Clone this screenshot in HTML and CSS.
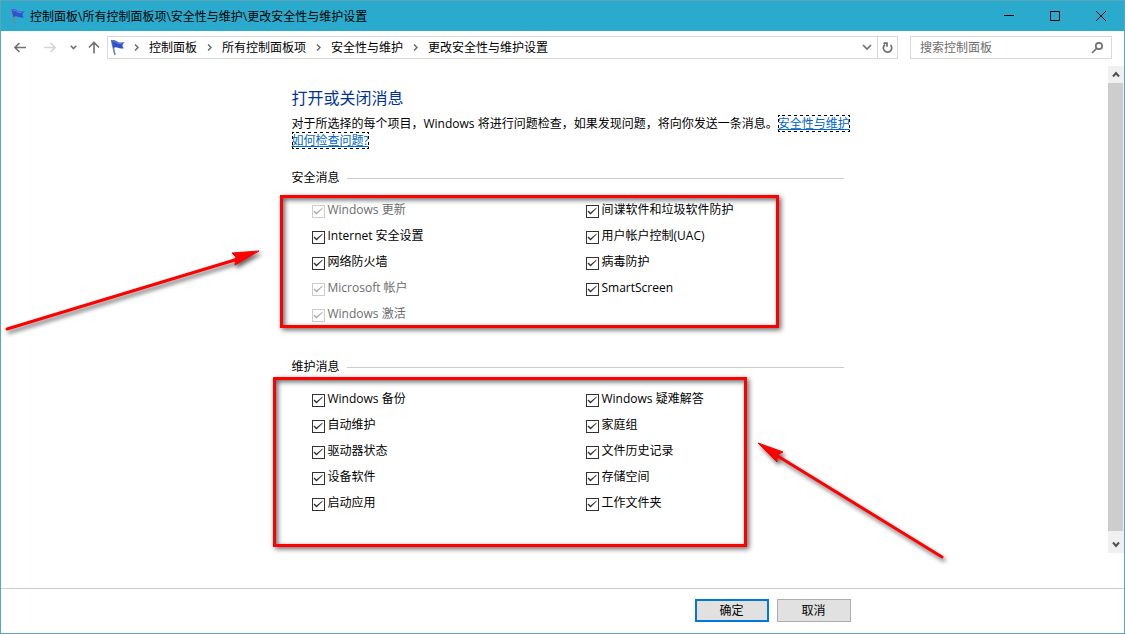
FILE: index.html
```
<!DOCTYPE html>
<html lang="zh-CN">
<head>
  <meta charset="UTF-8">
  <title>更改安全性与维护设置</title>
  <link rel="stylesheet" href="styles.css">
</head>
<body>

  <svg class="defs" aria-hidden="true">
    <symbol id="flag" viewBox="0 0 16 17">
      <path d="M1.500 1 5 16" stroke="#75869a" stroke-width="1.600" fill="none"/>
      <path d="M1.500 1.500C4 0 6 1.500 8 3c2 1 4 .5 7 .2-1.500 1-2.500 2-2.600 3.300.2 1.200.8 2 1.600 2.700-2.500.6-4.500.4-6-.4-1.600-.9-3-.9-4.600.4z" fill="#3152cc"/>
      <path d="M2.500 2.200C5 1.500 6 3.500 8.500 4.300c1.200.4 2.200.3 3.200 0" stroke="#7f9df0" stroke-width=".7" fill="none"/>
    </symbol>
    <symbol id="sep" viewBox="0 0 25 9">
      <path d="m11 1.500 3 3-3 3" stroke="#666" stroke-width="1.400" fill="none"/>
    </symbol>
  </svg>

  <div class="window">
    <!-- title bar -->
    <header class="titlebar">
      <svg class="flag"><use href="#flag"/></svg>
      <span class="caption">控制面板\所有控制面板项\安全性与维护\更改安全性与维护设置</span>
      <button class="win-btn" aria-label="最小化"><svg width="10" height="10"><path d="M0 4.500h10"/></svg></button>
      <button class="win-btn" aria-label="最大化"><svg width="10" height="10"><path d="M.5.5h9v9h-9z"/></svg></button>
      <button class="win-btn" aria-label="关闭"><svg width="10" height="10"><path d="m0 0 10 10m0-10-10 10"/></svg></button>
    </header>

    <!-- navigation -->
    <nav class="toolbar">
      <button class="nav-btn" aria-label="后退"><svg width="12" height="11"><path d="M12 5.500H1M5.500 1 1 5.500 5.500 10"/></svg></button>
      <button class="nav-btn off" aria-label="前进" disabled><svg width="12" height="11"><path d="M0 5.500h11M6.500 1 11 5.500 6.500 10"/></svg></button>
      <button class="nav-btn recent" aria-label="最近位置"><svg width="7" height="5"><path d="m.8.8 2.700 2.700L6.200.8"/></svg></button>
      <button class="nav-btn up" aria-label="向上"><svg width="12" height="13"><path d="M6 12.500v-11M1 6.500l5-5 5 5"/></svg></button>

      <div class="address">
        <svg class="flag"><use href="#flag"/></svg>
        <svg class="sep"><use href="#sep"/></svg>
        <a href="#">控制面板</a>
        <svg class="sep"><use href="#sep"/></svg>
        <a href="#">所有控制面板项</a>
        <svg class="sep"><use href="#sep"/></svg>
        <a href="#">安全性与维护</a>
        <svg class="sep"><use href="#sep"/></svg>
        <a href="#">更改安全性与维护设置</a>
        <button class="addr-btn drop" aria-label="历史"><svg width="10" height="7"><path d="m1 1 4 4 4-4"/></svg></button>
        <button class="addr-btn refresh" aria-label="刷新"><svg width="11" height="12"><path d="M3 2.500A4.200 4.200 0 1 0 8.600 3M1.500 1.200H5v3.600"/></svg></button>
      </div>

      <div class="search">
        <input type="text" placeholder="搜索控制面板" aria-label="搜索控制面板">
        <svg width="12" height="12"><circle cx="8" cy="4" r="3.200"/><path d="M5.500 6.500 1 11"/></svg>
      </div>
    </nav>

    <div class="body">
      <main class="page">
        <div class="content">
          <h1>打开或关闭消息</h1>
          <p>对于所选择的每个项目，Windows 将进行问题检查，如果发现问题，将向你发送一条消息。<a class="help" href="#">安全性与维护如何检查问题?</a></p>

          <section class="group">
            <h2>安全消息</h2>
            <div class="options">
              <label class="off"><input type="checkbox" checked disabled><span>Windows 更新</span></label>
              <label><input type="checkbox" checked><span>间谍软件和垃圾软件防护</span></label>
              <label><input type="checkbox" checked><span>Internet 安全设置</span></label>
              <label><input type="checkbox" checked><span>用户帐户控制(UAC)</span></label>
              <label><input type="checkbox" checked><span>网络防火墙</span></label>
              <label><input type="checkbox" checked><span>病毒防护</span></label>
              <label class="off"><input type="checkbox" checked disabled><span>Microsoft 帐户</span></label>
              <label><input type="checkbox" checked><span>SmartScreen</span></label>
              <label class="off"><input type="checkbox" checked disabled><span>Windows 激活</span></label>
            </div>
            <div class="mark mark-security"></div>
            <svg class="arrow arrow-security" width="260" height="90">
              <path class="line" d="M5 83 236 13"/>
              <path class="head" d="M257 5 230 7l4 4-1 8z"/>
            </svg>
          </section>

          <section class="group">
            <h2>维护消息</h2>
            <div class="options">
              <label><input type="checkbox" checked><span>Windows 备份</span></label>
              <label><input type="checkbox" checked><span>Windows 疑难解答</span></label>
              <label><input type="checkbox" checked><span>自动维护</span></label>
              <label><input type="checkbox" checked><span>家庭组</span></label>
              <label><input type="checkbox" checked><span>驱动器状态</span></label>
              <label><input type="checkbox" checked><span>文件历史记录</span></label>
              <label><input type="checkbox" checked><span>设备软件</span></label>
              <label><input type="checkbox" checked><span>存储空间</span></label>
              <label><input type="checkbox" checked><span>启动应用</span></label>
              <label><input type="checkbox" checked><span>工作文件夹</span></label>
            </div>
            <div class="mark mark-maintenance"></div>
            <svg class="arrow arrow-maintenance" width="200" height="125">
              <path class="line" d="M188 117 22 15"/>
              <path class="head" d="m4 3 25 9-6 3 0 7z"/>
            </svg>
          </section>
        </div>
      </main>

      <div class="scrollbar">
        <button aria-label="向上滚动"><svg width="8" height="7"><path d="m1 5.500 3-3.500 3 3.500"/></svg></button>
        <div class="thumb"></div>
        <button class="down" aria-label="向下滚动"><svg width="8" height="7"><path d="m1 1.500 3 3.500 3-3.500"/></svg></button>
      </div>
    </div>

    <footer class="footer">
      <div class="actions">
        <button class="default">确定</button>
        <button>取消</button>
      </div>
    </footer>
  </div>

</body>
</html>
```
FILE: styles.css
```
* {
  box-sizing: border-box;
}

body {
  margin: 0;
  font-family: "Open Sans", "Noto Sans CJK SC", sans-serif;
  font-size: 12px;
  line-height: 17px;
  color: #000;
  background: #fff;
}

button,
input {
  font: inherit;
  color: inherit;
}

button {
  padding: 0;
  border: none;
  background: none;
}

svg {
  display: block;
  flex: none;
  fill: none;
}

.defs {
  position: absolute;
  width: 0;
  height: 0;
}

.window {
  display: flex;
  flex-direction: column;
  min-height: 100vh;
  border: 1px solid #5ba7b9;
  overflow: hidden;
}

.flag {
  width: 16px;
  height: 17px;
}

/* title bar */
.titlebar {
  display: flex;
  align-items: center;
  height: 30px;
  padding-left: 9px;
  background: #2aabcd;
}

.caption {
  flex: 1;
  margin-left: 4px;
}

.win-btn {
  display: flex;
  align-items: center;
  justify-content: center;
  width: 46px;
  height: 28px;
}

.win-btn svg {
  stroke: #000;
}

/* navigation */
.toolbar {
  display: flex;
  align-items: center;
  height: 35px;
  padding: 0 12px 2px 4px;
}

.nav-btn {
  display: flex;
  align-items: center;
  justify-content: center;
  width: 30px;
  height: 23px;
}

.nav-btn svg {
  stroke: #707070;
  stroke-width: 1.6;
}

.nav-btn.off svg {
  stroke: #d5d5d5;
}

.nav-btn.recent {
  width: 16px;
}

.nav-btn.up {
  width: 26px;
}

.address {
  display: flex;
  flex: 1;
  align-items: center;
  height: 23px;
  margin-right: 12px;
  padding-left: 2px;
  border: 1px solid #d9d9d9;
}

.address .flag {
  margin-right: -2px;
}

.address a {
  color: #000;
  text-decoration: none;
}

.sep {
  width: 25px;
  height: 9px;
}

.addr-btn {
  display: flex;
  align-items: center;
  justify-content: center;
  width: 20px;
  height: 21px;
}

.addr-btn svg {
  stroke: #707070;
  stroke-width: 1.7;
}

.drop {
  margin-left: auto;
}

.refresh {
  border-left: 1px solid #d9d9d9;
}

.search {
  display: flex;
  align-items: center;
  width: 202px;
  height: 23px;
  padding: 0 8px 0 9px;
  border: 1px solid #d9d9d9;
}

.search input {
  flex: 1;
  min-width: 0;
  padding: 0;
  border: none;
  outline: none;
}

.search input::placeholder {
  color: #6d6d6d;
}

.search svg {
  stroke: #707070;
  stroke-width: 1.7;
}

/* page */
.body {
  display: flex;
  flex: 1;
  padding-bottom: 35px;
}

.page {
  flex: 1;
  padding-top: 20px;
}

.content {
  width: 602px;
  margin: 0 auto;
  padding-left: 38px;
}

h1 {
  margin: 0 0 5px;
  font-size: 16px;
  font-weight: normal;
  line-height: 24px;
  color: #003399;
}

p {
  margin: 0;
}

.help {
  color: #0066cc;
  outline: 1px dotted #000;
  outline-offset: -1px;
}

.group {
  position: relative;
  width: 552px;
  margin-top: 19px;
}

.group + .group {
  margin-top: 29px;
}

h2 {
  display: flex;
  align-items: center;
  gap: 7px;
  margin: 0 0 10px;
  font-size: 12px;
  font-weight: normal;
  line-height: 20px;
}

h2::after {
  content: "";
  flex: 1;
  height: 1px;
  background: #ccc;
}

.options {
  display: grid;
  grid-template-columns: 274px 1fr;
  grid-auto-rows: 26px;
  padding-left: 20px;
}

.options label {
  display: flex;
  align-items: center;
  gap: 3px;
}

.options span {
  padding-bottom: 3px;
}

.options .off {
  color: #6d6d6d;
}

.options input {
  width: 13px;
  height: 13px;
  margin: 0;
  border: 1px solid #333;
  background: #fff;
  appearance: none;
}

.options input:checked::before {
  content: "";
  display: block;
  width: 11px;
  height: 11px;
  background: #333;
  clip-path: polygon(1px 6px, 2px 5px, 4px 7px, 10px 2px, 10px 3px, 4px 9px);
}

.options input:disabled {
  border-color: #ccc;
}

.options input:disabled::before {
  background: #aaa;
}

/* red annotations over the page */
.mark {
  position: absolute;
  border: 3px solid #f00;
  box-shadow: 2px 2px 5px rgba(0, 0, 0, 0.6), inset 2px 2px 5px rgba(0, 0, 0, 0.6);
  pointer-events: none;
}

.mark-security {
  top: 27px;
  left: -12px;
  width: 499px;
  height: 133px;
}

.mark-maintenance {
  top: 20px;
  left: -19px;
  width: 474px;
  height: 170px;
}

.arrow {
  position: absolute;
  filter: drop-shadow(2px 3px 2px rgba(0, 0, 0, 0.6));
  overflow: visible;
  pointer-events: none;
}

.arrow-security {
  top: 78px;
  left: -290px;
}

.arrow-maintenance {
  top: 83px;
  left: 462px;
}

.arrow .line {
  stroke: #f00;
  stroke-width: 3;
  stroke-linecap: round;
}

.arrow .head {
  fill: #f00;
  stroke: #f00;
}

/* scrollbar */
.scrollbar {
  display: flex;
  flex-direction: column;
  width: 16px;
  background: #f0f0f0;
}

.scrollbar button {
  display: flex;
  align-items: center;
  justify-content: center;
  height: 17px;
}

.scrollbar .down {
  height: 22px;
  padding-top: 5px;
}

.scrollbar svg {
  stroke: #505050;
  stroke-width: 2;
}

.thumb {
  flex: 1;
  margin-right: 1px;
  background: #cdcdcd;
}

/* bottom buttons */
.footer {
  padding: 10px 0 11px;
  border-top: 1px solid #ccc;
}

.actions {
  display: flex;
  justify-content: flex-end;
  gap: 8px;
  width: 602px;
  margin: 0 auto;
  padding-right: 13px;
}

.actions button {
  width: 74px;
  height: 23px;
  border: 1px solid #adadad;
  background: #e1e1e1;
}

.actions .default {
  border: 2px solid #0078d7;
}
```
